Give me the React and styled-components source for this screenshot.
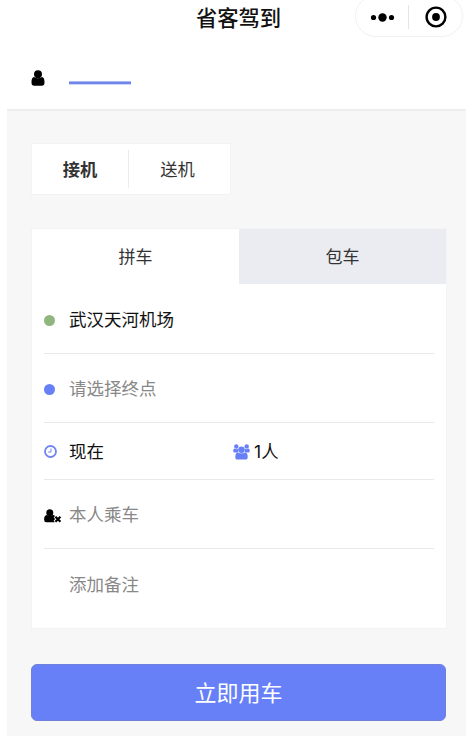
import React from "react";
import styled, { createGlobalStyle } from "styled-components";

const GlobalStyle = createGlobalStyle`
  * {
    box-sizing: border-box;
  }

  body {
    margin: 0;
    background: #fff;
    font-family: "Noto Sans CJK SC", sans-serif;
    overflow: hidden;
  }
`;

const Page = styled.div`
  display: flex;
  flex-direction: column;
  width: 466px;
  height: 736px;
  padding-left: 7px;
  background: #fff;
`;

const NavBar = styled.header`
  display: grid;
  grid-template-columns: 1fr auto 1fr;
  height: 38px;
  padding-right: 3px;
`;

const Title = styled.h1`
  grid-column: 2;
  margin: 0 0 0 7px;
  font-size: 21.3px;
  font-weight: 500;
  line-height: 33px;
  color: #111;
`;

const Capsule = styled.div`
  justify-self: end;
  display: flex;
  align-items: center;
  width: 108px;
  height: 42px;
  margin-top: -5px;
  padding-top: 2px;
  border: 1px solid #f1f1f1;
  border-radius: 21px;
`;

const CapsuleButton = styled.div`
  flex: ${(props) => (props.$wide ? "0 0 52px" : 1)};
  display: flex;
  justify-content: center;

  & + & {
    border-left: 1px solid #e4e4e4;
  }
`;

const UserBar = styled.div`
  display: flex;
  align-items: flex-start;
  height: 73px;
  padding: 32px 24px 0;
  border-bottom: 2px solid #eeeeee;
`;

const NameLine = styled.div`
  width: 62px;
  height: 4px;
  margin: 11px 0 0 24px;
  background: #6f86e8;
  border: solid #c9d5fb;
  border-width: 0 0 1px;
  border-top: 1px solid #a9b8f3;
`;

const Content = styled.main`
  flex: 1;
  padding: 32px 19px 0 24px;
  background: #f7f7f7;
`;

const Switcher = styled.div`
  display: flex;
  align-items: center;
  width: 200px;
  height: 52px;
  background: #fff;
  border: 1px solid #f3f3f3;
`;

const SwitchItem = styled.div`
  width: ${(props) => (props.$active ? 96 : 98)}px;
  height: 38px;
  font-size: 17.3px;
  font-weight: ${(props) => (props.$active ? 700 : 400)};
  line-height: 37px;
  text-align: center;
  color: #333;

  & + & {
    border-left: 1px solid #ececec;
  }
`;

const Card = styled.section`
  height: 401px;
  margin-top: 33px;
  background: #fff;
  border: 1px solid #f3f3f3;
`;

const Tabs = styled.div`
  display: grid;
  grid-template-columns: 1fr 1fr;
`;

const Tab = styled.div`
  height: 55px;
  font-size: 17px;
  line-height: 53px;
  text-align: center;
  color: #333;
  background: ${(props) => (props.$active ? "#fff" : "#ebecf2")};
`;

const Row = styled.div`
  display: flex;
  align-items: center;
  height: ${(props) => props.$height}px;
  margin: 0 12px;
  border-bottom: ${(props) => (props.$last ? "none" : "1px solid #e9e9e9")};
`;

const Cell = styled.div`
  display: flex;
  align-items: center;
  width: 189px;
`;

const IconSlot = styled.div`
  flex: none;
  display: flex;
  width: ${(props) => props.$width || 25}px;
  padding-top: ${(props) => (props.$low ? 3 : 1)}px;
`;

const Label = styled.span`
  font-size: 17.5px;
  line-height: 26px;
  color: ${(props) => (props.$muted ? "#888" : "#111")};
`;

const Count = styled.span`
  font-family: Inter, sans-serif;
`;

const Dot = styled.div`
  width: 11px;
  height: 11px;
  border-radius: 50%;
  background: ${(props) => props.$color};
`;

const Submit = styled.button`
  display: block;
  width: 415px;
  height: 57px;
  margin-top: 35px;
  padding: 0 0 3px;
  border: 1px solid #7080d8;
  border-radius: 6px;
  background: #6880f7;
  color: #fff;
  font-family: inherit;
  font-size: 22px;
  font-weight: 400;
`;

function UserIcon() {
  return (
    <svg width="14" height="16" viewBox="0 0 14 16">
      <path d="M3 7Q7 9.600 11 7C12.900 7.300 13.500 9.400 13.500 12.500Q13.500 15.800 10.800 15.800H3.200Q0.500 15.800 0.500 12.500C0.500 9.400 1.100 7.300 3 7Z" />
      <circle cx="7" cy="4.300" r="4" />
    </svg>
  );
}

function ClockIcon() {
  return (
    <svg width="13" height="13" viewBox="0 0 13 13" fill="none" stroke="#6f86ee">
      <circle cx="6.500" cy="6.500" r="5.500" strokeWidth="1.800" />
      <path d="M7 3.500V7H4.200" strokeWidth="1" />
    </svg>
  );
}

function UsersIcon() {
  return (
    <svg width="17" height="16" viewBox="0 0 17 16" fill="#6880f7">
      <circle cx="3.300" cy="2.500" r="2.200" />
      <circle cx="13.700" cy="2.500" r="2.200" />
      <path d="M1.500 4.500Q3.300 5.800 5.300 4.800L5.200 8.500H1.700Q0.200 8.500 0.200 6.900Q0.200 5 1.500 4.500ZM15.500 4.500Q13.700 5.800 11.700 4.800L11.800 8.500H15.300Q16.800 8.500 16.800 6.900Q16.800 5 15.500 4.500Z" />
      <circle cx="8.500" cy="5.700" r="3.200" />
      <path d="M4.800 8.400Q8.500 10.300 12.200 8.400C14.200 8.800 14.700 10.600 14.700 13Q14.700 15.600 12.300 15.600H4.700Q2.300 15.600 2.300 13C2.300 10.600 2.800 8.800 4.800 8.400Z" />
    </svg>
  );
}

function UserTimesIcon() {
  return (
    <svg width="18" height="14" viewBox="0 0 18 14">
      <circle cx="5.800" cy="3.800" r="3.500" />
      <path d="M2.800 6Q5.800 8.200 8.800 6Q10.400 6.200 11 7L9.700 8.400L11.100 10L9.600 11.700L10.900 13.200H2.400Q0.100 13.200 0.100 10.700C0.100 8 0.800 6.200 2.800 6Z" />
      <path d="M11.400 7.700L16.400 12.700M16.400 7.700L11.400 12.700" stroke="#000" strokeWidth="2.200" />
    </svg>
  );
}

function App() {
  return (
    <Page>
      <GlobalStyle />
      <NavBar>
        <Title>省客驾到</Title>
        <Capsule>
          <CapsuleButton $wide>
            <svg width="26" height="24" viewBox="0 0 26 24">
              <circle cx="4.5" cy="12.5" r="2.6" />
              <circle cx="13.5" cy="12.5" r="4.2" />
              <circle cx="22.5" cy="12.5" r="2.6" />
            </svg>
          </CapsuleButton>
          <CapsuleButton>
            <svg width="24" height="24" viewBox="0 0 24 24">
              <circle cx="12" cy="12" r="9.4" fill="none" stroke="#000" strokeWidth="2.4" />
              <circle cx="12" cy="12" r="3.9" />
            </svg>
          </CapsuleButton>
        </Capsule>
      </NavBar>
      <UserBar>
        <UserIcon />
        <NameLine />
      </UserBar>
      <Content>
        <Switcher>
          <SwitchItem $active>接机</SwitchItem>
          <SwitchItem>送机</SwitchItem>
        </Switcher>
        <Card>
          <Tabs>
            <Tab $active>拼车</Tab>
            <Tab>包车</Tab>
          </Tabs>
          <Row $height={70}>
            <IconSlot $low>
              <Dot $color="#90b67d" />
            </IconSlot>
            <Label>武汉天河机场</Label>
          </Row>
          <Row $height={69}>
            <IconSlot $low>
              <Dot $color="#6880f7" />
            </IconSlot>
            <Label $muted>请选择终点</Label>
          </Row>
          <Row $height={57}>
            <Cell>
              <IconSlot>
                <ClockIcon />
              </IconSlot>
              <Label>现在</Label>
            </Cell>
            <Cell>
              <IconSlot $width={21}>
                <UsersIcon />
              </IconSlot>
              <Label>
                <Count>1</Count>人
              </Label>
            </Cell>
          </Row>
          <Row $height={69}>
            <IconSlot $low>
              <UserTimesIcon />
            </IconSlot>
            <Label $muted>本人乘车</Label>
          </Row>
          <Row $height={69} $last>
            <IconSlot />
            <Label $muted>添加备注</Label>
          </Row>
        </Card>
        <Submit>立即用车</Submit>
      </Content>
    </Page>
  );
}

export default App;
